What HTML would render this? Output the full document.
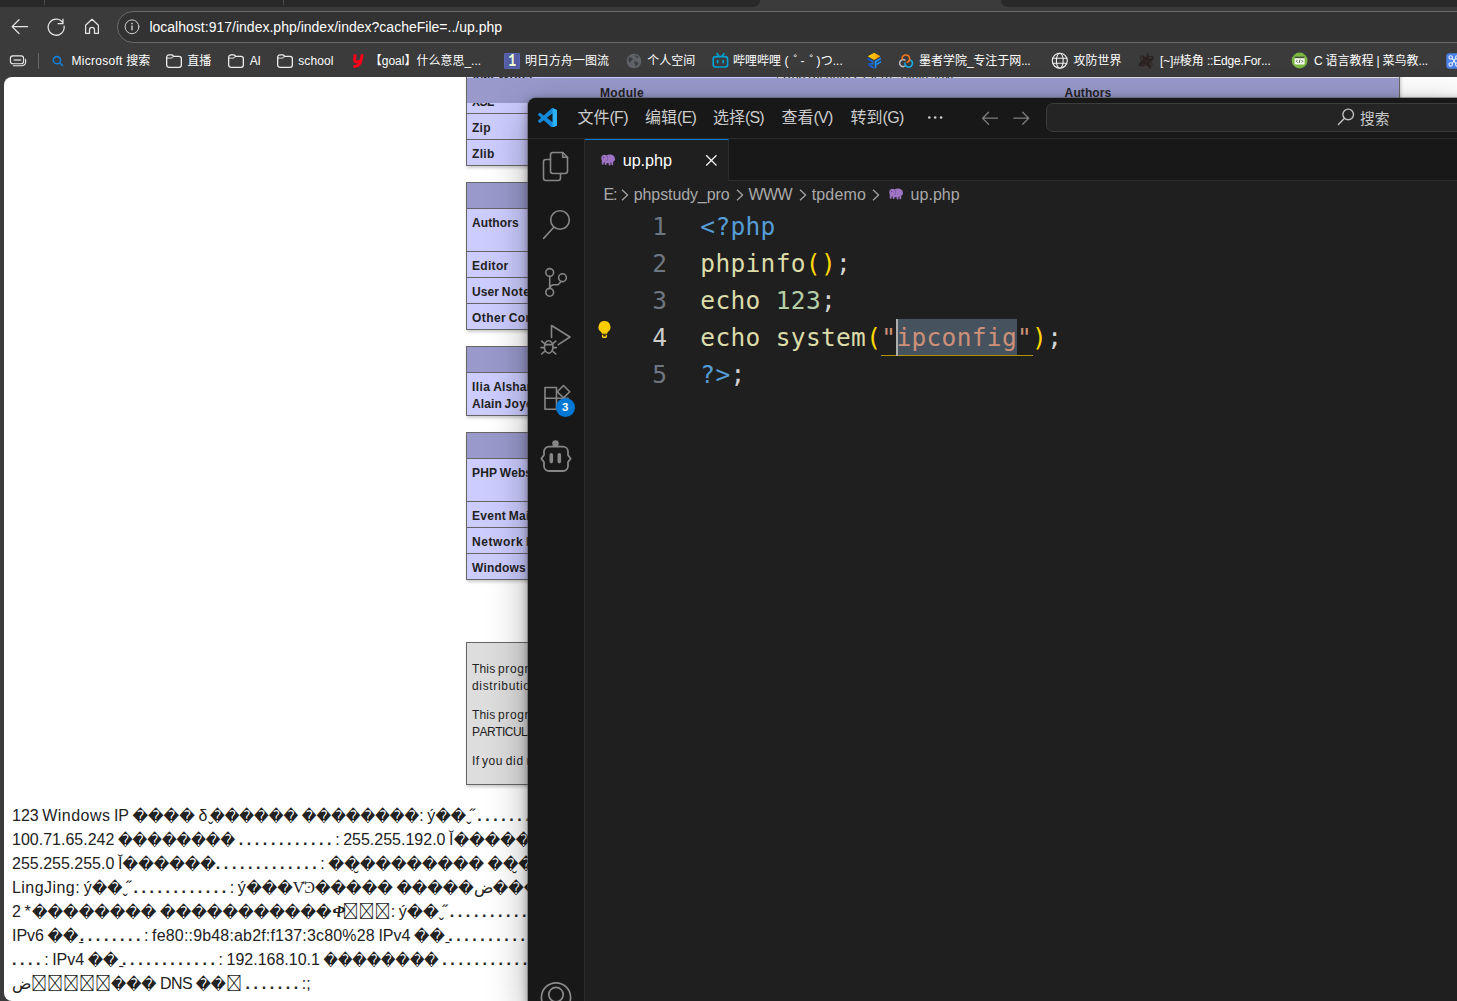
<!DOCTYPE html>
<html lang="zh-CN">
<head>
<meta charset="utf-8">
<title>up.php</title>
<style>
*{box-sizing:border-box}
html,body{margin:0;padding:0}
body{width:1457px;height:1001px;overflow:hidden;position:relative;background:#3b3b3b;
  font-family:"Liberation Sans","Noto Sans CJK SC",sans-serif;color:#222;font-kerning:none}
.abs{position:absolute}
/* ---------- browser chrome ---------- */
#tabstrip{left:0;top:0;width:1457px;height:7px;background:#3b3b3b}
#tabstrip .t1{left:0;top:0;width:760px;height:7px;background:#292929;border-bottom-right-radius:7px}
#tabstrip .t2{left:1001px;top:0;width:456px;height:7px;background:#292929;border-bottom-left-radius:7px}
#tabstrip .sep{top:0;width:1px;height:5px;background:#4a4a4a}
#urlbar{left:117px;top:11px;width:1400px;height:32px;border:1px solid #6a6a6a;border-radius:16px;background:#323232}
#url{top:17px;font-size:14px;line-height:20px;color:#fff;white-space:nowrap}
.bm{top:51px;height:20px;line-height:20px;font-size:12px;color:#fff;white-space:nowrap}

/* ---------- page ---------- */
#page{left:4px;top:77px;width:1453px;height:924px;background:#fff;border-radius:8px 0 0 8px;overflow:hidden}
#page table{position:absolute;left:462px;width:934px;border-collapse:collapse;border:0;box-shadow:1px 2px 3px #ccc;table-layout:fixed}
#page td,#page th{word-spacing:-.65px;border:1px solid #666;font-size:12px;line-height:17px;vertical-align:baseline;padding:6.4px 5px 1.6px;text-align:left;white-space:nowrap;overflow:hidden}
#page th{text-align:center}
.e{background:#ccf;width:311px;font-weight:bold}
.h{background:#99c;font-weight:bold}
.v{background:#ddd}
.v p{margin:12px 0;word-spacing:-.65px;font-size:12px;line-height:17px;white-space:nowrap}
#sticky{word-spacing:-.65px;left:463px;top:1px;width:932px;height:25px;background:#99c;font-weight:bold;font-size:12px;line-height:17px}
#sticky div{position:absolute;top:6.5px;text-align:center}
#out{position:absolute;left:8px;top:727px;font-size:16px;line-height:24px;white-space:nowrap;color:#222;word-spacing:-.86px}
#out .q{display:inline-block;font-family:"DejaVu Sans",sans-serif;line-height:20px;letter-spacing:0;word-spacing:0}
.sf{font-family:"Liberation Serif",serif;line-height:0}
.nf{font-family:"Noto Sans CJK SC",sans-serif;line-height:0}

/* ---------- vscode ---------- */
#vsc{left:528px;top:98px;width:940px;height:910px;background:#1f1f1f;border-radius:8px 0 0 0;box-shadow:0 0 0 1px rgba(80,80,80,.45),0 2px 8px rgba(0,0,0,.36),0 12px 40px rgba(0,0,0,.32);overflow:hidden;color:#ccc}
#vsc .title{left:0;top:0;width:940px;height:41px;background:#181818;border-bottom:1px solid #2b2b2b}
#vsc .act{left:0;top:41px;width:57px;height:870px;background:#181818;border-right:1px solid #2b2b2b}
#vsc .tabs{left:57px;top:41px;width:890px;height:42px;background:#181818;border-bottom:1px solid #2b2b2b}
#vsc .tab{left:57px;top:41px;width:144px;height:42px;background:#1f1f1f;border-top:1.5px solid #0078d4;border-right:1px solid #2b2b2b}
.menu{top:8px;height:24px;line-height:24px;font-size:16px;color:#ccc;white-space:nowrap}
#sbox{left:518px;top:5px;width:440px;height:29px;border:1px solid #3c3c3c;border-radius:7px;background:#242424}
.crumb{top:85px;height:24px;line-height:24px;font-size:16px;color:#a9a9a9;white-space:nowrap}
.code{left:172.3px;height:37px;line-height:37px;font-family:"DejaVu Sans Mono","Liberation Mono",monospace;font-size:24.5px;letter-spacing:.33px;white-space:pre;color:#d4d4d4}
.ln{left:99px;width:40px;text-align:right;height:37px;line-height:37px;font-family:"DejaVu Sans Mono","Liberation Mono",monospace;font-size:24.5px;color:#6e7681}
</style>
</head>
<body>
<div id="tabstrip" class="abs">
  <div class="abs t1"></div><div class="abs t2"></div>
  <div class="abs sep" style="left:44px"></div><div class="abs sep" style="left:283px"></div>
</div>
<div id="urlbar" class="abs"></div>
<div id="url" class="abs" style="left:149.4px;"><span style="letter-spacing:0.01px">localhost:917/index.php/index/index?cacheFile=../up.php</span></div>
<svg class="abs" style="left:0;top:7px" width="150" height="40" viewBox="0 0 150 40" fill="none" stroke="#e4e4e4" stroke-width="1.25" stroke-linecap="round" stroke-linejoin="round">
  <path d="M27.6 19.6H12.4M19 12.7L12.1 19.6L19 26.5"/>
  <path d="M64.100 19.100A8 8 0 1 1 63.100 16.200M62.950 12V16.650H58.100"/>
  <path d="M85.600 18.200L92 12.300L98.400 18.200V26.400H94.500V22.900A2.500 2.500 0 0 0 89.500 22.900V26.400H85.600Z"/>
  <circle cx="132" cy="19.8" r="6.9" stroke="#cfcfcf" stroke-width="1"/>
  <path d="M132 19v3.8" stroke="#cfcfcf" stroke-width="1.4"/><circle cx="132" cy="16.6" r="0.85" fill="#cfcfcf" stroke="none"/>
</svg>
<svg class="abs" style="left:0;top:48px" width="70" height="28" viewBox="0 0 70 28" fill="none">
  <rect x="10.400" y="7.900" width="13.200" height="7.800" rx="2.500" stroke="#ececec" stroke-width="1.150"/>
  <path d="M14.200 11.900h6.400" stroke="#c9c9c9" stroke-width="1.500" stroke-linecap="round"/>
  <path d="M13.300 17.700h9a3.300 3.300 0 0 0 3.300-3.300v-3.200" stroke="#ececec" stroke-width="1.100" stroke-linecap="round"/>
  <path d="M38.500 5.200v15.600" stroke="#686868" stroke-width="1"/>
  <circle cx="56.900" cy="12.200" r="3.600" stroke="#117ed8" stroke-width="1.600"/><path d="M59.600 14.900l3 2.600" stroke="#117ed8" stroke-width="1.600" stroke-linecap="round"/>
</svg>
<div class="abs bm" style="left:71.5px;"><span style="letter-spacing:0.27px">Microsoft </span>搜索</div>
<div class="abs bm" style="left:187.2px;">直播</div>
<div class="abs bm" style="left:249.7px;"><span style="letter-spacing:-0.20px">AI</span></div>
<div class="abs bm" style="left:298.3px;"><span style="letter-spacing:0.07px">school</span></div>
<div class="abs bm" style="left:369.7px;">【<span style="letter-spacing:0.00px">goal</span>】什么意思<span style="letter-spacing:0.00px">_...</span></div>
<div class="abs bm" style="left:525.0px;">明日方舟一图流</div>
<div class="abs bm" style="left:647.3px;">个人空间</div>
<div class="abs bm" style="left:733.1px;">哔哩哔哩<span style="letter-spacing:0.04px"> (</span><span style="position:relative;left:5px">゜</span><span style="letter-spacing:0.04px">-</span><span style="position:relative;left:5px">゜</span><span style="letter-spacing:0.04px">)</span>つ<span style="letter-spacing:0.04px">...</span></div>
<div class="abs bm" style="left:919.0px;">墨者学院<span style="letter-spacing:-0.36px">_</span>专注于网<span style="letter-spacing:-0.36px">...</span></div>
<div class="abs bm" style="left:1073.6px;">攻防世界</div>
<div class="abs bm" style="left:1160.1px;"><span style="letter-spacing:-0.18px">[~]#</span>棱角<span style="letter-spacing:-0.18px"> ::Edge.For...</span></div>
<div class="abs bm" style="left:1313.9px;"><span style="letter-spacing:-0.24px">C </span>语言教程<span style="letter-spacing:-0.24px"> | </span>菜鸟教<span style="letter-spacing:-0.24px">...</span></div>
<svg class="abs" style="left:165px;top:53px" width="18" height="16" viewBox="0 0 18 16" fill="none" stroke="#ededed" stroke-width="1.3" stroke-linejoin="round"><path d="M1.650 4.300A2.400 2.400 0 0 1 4.050 1.900H6.600Q7.600 1.900 8.200 2.700L8.700 3.300H13.950A2.400 2.400 0 0 1 16.350 5.700V11.900A2.400 2.400 0 0 1 13.950 14.300H4.050A2.400 2.400 0 0 1 1.650 11.900Z"/><path d="M1.650 5.200H6.300L8.700 3.300" stroke-opacity=".7"/></svg><svg class="abs" style="left:227px;top:53px" width="18" height="16" viewBox="0 0 18 16" fill="none" stroke="#ededed" stroke-width="1.3" stroke-linejoin="round"><path d="M1.650 4.300A2.400 2.400 0 0 1 4.050 1.900H6.600Q7.600 1.900 8.200 2.700L8.700 3.300H13.950A2.400 2.400 0 0 1 16.350 5.700V11.900A2.400 2.400 0 0 1 13.950 14.300H4.050A2.400 2.400 0 0 1 1.650 11.900Z"/><path d="M1.650 5.200H6.300L8.700 3.300" stroke-opacity=".7"/></svg><svg class="abs" style="left:276px;top:53px" width="18" height="16" viewBox="0 0 18 16" fill="none" stroke="#ededed" stroke-width="1.3" stroke-linejoin="round"><path d="M1.650 4.300A2.400 2.400 0 0 1 4.050 1.900H6.600Q7.600 1.900 8.200 2.700L8.700 3.300H13.950A2.400 2.400 0 0 1 16.350 5.700V11.900A2.400 2.400 0 0 1 13.950 14.300H4.050A2.400 2.400 0 0 1 1.650 11.900Z"/><path d="M1.650 5.200H6.300L8.700 3.300" stroke-opacity=".7"/></svg>

<!-- youdao y -->
<svg class="abs" style="left:351px;top:52px" width="15" height="18" viewBox="0 0 15 18" fill="none" stroke="#ff0018" stroke-width="2.900" stroke-linejoin="round"><path d="M4.100 2.300L3.600 7.600Q3.500 10.300 6.300 9.900L9.600 9.200"/><path d="M11.300 2.300L9.700 9.800Q8.700 14.300 2.400 14.600"/></svg>
<!-- "1" icon -->
<div class="abs" style="left:504px;top:53px;width:16px;height:16px;border-radius:2px;background:#545da3;box-shadow:inset 0 0 0 1px #5a67b6;color:#ecffd0;font:bold 17.500px/17.500px 'Liberation Mono',monospace;text-align:center;overflow:hidden"><span style="display:inline-block;transform:scaleX(.72)">1</span></div>
<!-- grey globe -->
<svg class="abs" style="left:626px;top:53px" width="16" height="16" viewBox="0 0 16 16"><circle cx="8" cy="8" r="7.3" fill="#5f6368"/><path d="M3 4.5c1.5-.5 3 .2 3.6 1.2.5 1-.6 1.600-1.400 2.200S4.600 9.800 3.400 9.300 2 6 3 4.500zM9 2.200c1.600 0 3.200 1 3.800 2.300-.8.500-2 .300-2.700-.300S8.600 3 9 2.200zM8.600 8.600c1.300-.500 3.300.100 3.800 1.200.400 1.100-.800 2.700-2.100 3.300-1 .300-1.200-1-1.600-1.900S7.600 9 8.600 8.600z" fill="#3c4043"/></svg>
<!-- bilibili -->
<svg class="abs" style="left:712px;top:52px" width="17" height="17" viewBox="0 0 17 17" fill="none" stroke="#00a1d6" stroke-width="1.6" stroke-linecap="round" stroke-linejoin="round"><rect x="1.2" y="4.600" width="14.400" height="10.400" rx="2.600"/><path d="M5 1.600l2 2.600M12 1.600l-2 2.600"/><path d="M5.600 8.600v2M11.200 8.600v2" stroke-width="1.800"/></svg>
<!-- cube -->
<svg class="abs" style="left:867px;top:52px" width="15" height="18" viewBox="0 0 15 18"><defs><linearGradient id="cg" x1="0" x2="1"><stop offset="0" stop-color="#ffd800"/><stop offset="1" stop-color="#ff9a00"/></linearGradient><linearGradient id="cb" x1="0" x2="1"><stop offset="0" stop-color="#0a46c8"/><stop offset="1" stop-color="#1f7cf2"/></linearGradient></defs><path d="M7.200 .7L13.400 4.200 7.200 7.900 .8 4.200z" fill="url(#cg)"/><path d="M.3 5.500L6.500 9.100V11L.3 7.400zM6.500 11L.3 11.200V12.800L6.500 12.600zM.3 11.200L6.500 14.800V16.700L.3 13.100z" fill="url(#cb)"/><path d="M7.700 9.100L13.900 5.500V7.400L9.400 10V11.400L13.900 8.800V10.700L9.400 13.300V15.700L7.700 16.700z" fill="#1e8bfa"/></svg>
<!-- cloud -->
<svg class="abs" style="left:898px;top:53px" width="17" height="16" viewBox="0 0 17 16" fill="none" stroke-width="1.550" stroke-linecap="round"><path d="M6.85 7.07A3.50 3.50 0 1 0 6.30 13.39" stroke="#b9bdc3"/><path d="M12.26 6.95A3.70 3.70 0 1 1 7.01 9.98" stroke="#16a9e6"/><path d="M4.26 6.34A3.70 3.70 0 1 1 9.17 9.18" stroke="#f6761f"/></svg>
<!-- globe outline -->
<svg class="abs" style="left:1051px;top:52px" width="18" height="18" viewBox="0 0 18 18" fill="none" stroke="#f0f0f0" stroke-width="1.100"><circle cx="8.800" cy="8.700" r="7.500"/><ellipse cx="8.800" cy="8.700" rx="3.400" ry="7.500"/><path d="M1.600 6.200h14.400M1.600 11.200h14.400"/></svg>
<!-- dark star -->
<svg class="abs" style="left:1137px;top:52px" width="18" height="18" viewBox="0 0 18 18" fill="none" stroke="#2a2020" stroke-width=".9"><path d="M10.800 1L11.300 7.300 16.600 5.600 11.900 10.200 13.400 16.800 8.300 11.600 1.800 12.800 6.800 8.600 5.400 3.400 9.300 6.600z" fill="#2e2424"/><ellipse cx="9.200" cy="9.200" rx="7.800" ry="2.800" transform="rotate(-32 9.200 9.200)"/><ellipse cx="9.200" cy="9.200" rx="7.200" ry="2.600" transform="rotate(38 9.200 9.200)"/></svg>
<!-- runoob -->
<svg class="abs" style="left:1291px;top:52px" width="17" height="17" viewBox="0 0 17 17"><circle cx="8.600" cy="8.500" r="7.900" fill="#7cb83f"/><rect x="3.600" y="4.400" width="10" height="8.200" rx=".8" fill="#f4f8ee"/><rect x="3.600" y="4.400" width="10" height="1.800" fill="#3c5a28"/><path d="M6.600 8l-1.300 1.300 1.300 1.300M10.600 8l1.300 1.300-1.300 1.300M9 7.700l-.9 3.300" stroke="#33471f" stroke-width=".8" fill="none"/></svg>
<!-- blue icon (cut) -->
<svg class="abs" style="left:1446px;top:53px" width="16" height="16" viewBox="0 0 16 16"><rect x=".3" y=".3" width="15.400" height="15.400" rx="3" fill="#4a82ea"/><path d="M3 4.400a1.700 1.700 0 1 1 3.400 0 1.700 1.700 0 1 1-3.400 0zM3 11.400a1.700 1.700 0 1 1 3.400 0 1.700 1.700 0 1 1-3.400 0zM6.300 5.400l3.400 5M6.300 10.400l3.400-5M9.600 4.400a1.700 1.700 0 1 1 3.400 0 1.700 1.700 0 1 1-3.400 0zM9.600 11.400a1.700 1.700 0 1 1 3.400 0 1.700 1.700 0 1 1-3.400 0z" fill="none" stroke="#e9f0ff" stroke-width="1.100"/></svg>

<div id="page" class="abs">
<table style="top:-16px"><tbody>
<tr><td class="e"><span style="letter-spacing:0.20px">XMLWriter</span></td><td class="v"><span style="letter-spacing:0.10px">Rob</span> <span style="letter-spacing:0.16px">Richards,</span> <span style="letter-spacing:0.25px">Pierre-Alain</span> <span style="letter-spacing:0.31px">Joye</span></td></tr>
<tr><td class="e"><span style="letter-spacing:-0.46px">XSL</span></td><td class="v"><span style="letter-spacing:0.34px">Christian</span> <span style="letter-spacing:0.29px">Stocker,</span> <span style="letter-spacing:0.10px">Rob</span> <span style="letter-spacing:0.18px">Richards</span></td></tr>
<tr><td class="e"><span style="letter-spacing:0.25px">Zip</span></td><td class="v"><span style="letter-spacing:0.25px">Pierre-Alain</span> <span style="letter-spacing:0.25px">Joye,</span> <span style="letter-spacing:0.17px">Remi</span> <span style="letter-spacing:0.37px">Collet</span></td></tr>
<tr><td class="e"><span style="letter-spacing:0.30px">Zlib</span></td><td class="v">Rasmus <span style="letter-spacing:0.38px">Lerdorf,</span> <span style="letter-spacing:0.27px">Stefan</span> <span style="letter-spacing:0.24px">Roehrich,</span> Zeev <span style="letter-spacing:0.17px">Suraski,</span> <span style="letter-spacing:0.31px">Jade</span> <span style="letter-spacing:0.51px">Nicoletti,</span> <span style="letter-spacing:0.27px">Michael</span> <span style="letter-spacing:0.29px">Wallner</span></td></tr>
</tbody></table>
<div id="sticky" class="abs"><div style="left:0;width:310px"><span style="letter-spacing:0.31px">Module</span></div><div style="left:310px;width:622px"><span style="letter-spacing:0.11px">Authors</span></div></div>
<table style="top:105px"><tbody>
<tr class="h"><th colspan="2"><span style="letter-spacing:0.14px">PHP</span> <span style="letter-spacing:0.38px">Documentation</span></th></tr>
<tr><td class="e" style="width:467px"><span style="letter-spacing:0.11px">Authors</span></td><td class="v"><span style="letter-spacing:0.35px">Mehdi</span> <span style="letter-spacing:0.27px">Achour,</span> <span style="letter-spacing:0.42px">Friedhelm</span> <span style="letter-spacing:0.15px">Betz,</span> <span style="letter-spacing:0.44px">Antony</span> <span style="letter-spacing:0.19px">Dovgal,</span> <span style="letter-spacing:0.47px">Nuno</span> <span style="letter-spacing:0.13px">Lopes,</span> <span style="letter-spacing:0.17px">Hannes</span> <span style="letter-spacing:0.17px">Magnusson,</span> <span style="letter-spacing:0.50px">Philip</span> <span style="letter-spacing:0.20px">Olson,</span><br><span style="letter-spacing:0.05px">Georg</span> <span style="letter-spacing:0.27px">Richter,</span> <span style="letter-spacing:0.34px">Damien</span> Seguy, <span style="letter-spacing:0.50px">Jakub</span> <span style="letter-spacing:0.06px">Vrana,</span> <span style="letter-spacing:0.31px">Adam</span> <span style="letter-spacing:0.22px">Harvey</span></td></tr>
<tr><td class="e"><span style="letter-spacing:0.31px">Editor</span></td><td class="v"><span style="letter-spacing:0.28px">Peter</span> <span style="letter-spacing:0.46px">Cowburn</span></td></tr>
<tr><td class="e"><span style="letter-spacing:0.11px">User</span> <span style="letter-spacing:0.46px">Note</span> <span style="letter-spacing:0.33px">Maintainers</span></td><td class="v"><span style="letter-spacing:0.28px">Daniel</span> <span style="letter-spacing:-0.20px">P.</span> <span style="letter-spacing:0.46px">Brown,</span> <span style="letter-spacing:0.31px">Thiago</span> <span style="letter-spacing:0.42px">Henrique</span> <span style="letter-spacing:0.33px">Pojda</span></td></tr>
<tr><td class="e"><span style="letter-spacing:0.43px">Other</span> <span style="letter-spacing:0.29px">Contributors</span></td><td class="v"><span style="letter-spacing:0.29px">Previously</span> <span style="letter-spacing:0.38px">active</span> <span style="letter-spacing:0.42px">authors,</span> <span style="letter-spacing:0.49px">editors</span> <span style="letter-spacing:0.50px">and</span> <span style="letter-spacing:0.61px">other</span> <span style="letter-spacing:0.61px">contributors</span> <span style="letter-spacing:0.24px">are</span> <span style="letter-spacing:0.49px">listed</span> <span style="letter-spacing:0.64px">in</span> <span style="letter-spacing:0.59px">the</span> <span style="letter-spacing:0.47px">manual.</span></td></tr>
</tbody></table>
<table style="top:269px"><tbody>
<tr class="h"><th><span style="letter-spacing:0.14px">PHP</span> <span style="letter-spacing:0.38px">Quality</span> <span style="letter-spacing:-0.09px">Assurance</span> <span style="letter-spacing:0.45px">Team</span></th></tr>
<tr><td class="e" style="width:auto"><span style="letter-spacing:0.45px">Ilia</span> <span style="letter-spacing:0.15px">Alshanetsky,</span> <span style="letter-spacing:0.20px">Joerg</span> <span style="letter-spacing:0.15px">Behrens,</span> <span style="letter-spacing:0.20px">Antony</span> <span style="letter-spacing:0.23px">Dovgal,</span> <span style="letter-spacing:0.35px">Stefan</span> <span style="letter-spacing:-0.11px">Esser,</span> <span style="letter-spacing:0.18px">Moriyoshi</span> <span style="letter-spacing:0.29px">Koizumi,</span> <span style="letter-spacing:0.07px">Magnus</span> <span style="letter-spacing:0.60px">Maatta,</span> <span style="letter-spacing:0.22px">Sebastian</span> <span style="letter-spacing:0.36px">Nohn,</span> <span style="letter-spacing:0.22px">Derick</span> <span style="letter-spacing:0.23px">Rethans,</span> <span style="letter-spacing:0.30px">Melvyn</span> <span style="letter-spacing:0.18px">Sopacua,</span> <span style="letter-spacing:0.35px">Pierre-</span><br><span style="letter-spacing:0.11px">Alain</span> <span style="letter-spacing:0.28px">Joye,</span> <span style="letter-spacing:0.49px">Dmitry</span> <span style="letter-spacing:0.22px">Stogov,</span> <span style="letter-spacing:0.24px">Felipe</span> <span style="letter-spacing:0.33px">Pena,</span> <span style="letter-spacing:0.25px">David</span> <span style="letter-spacing:0.19px">Soria</span> <span style="letter-spacing:0.42px">Parra,</span> <span style="letter-spacing:0.22px">Stanislav</span> <span style="letter-spacing:0.23px">Malyshev,</span> <span style="letter-spacing:0.31px">Julien</span> <span style="letter-spacing:0.34px">Pauli,</span> <span style="letter-spacing:0.32px">Stephen</span> <span style="letter-spacing:0.23px">Zarkos,</span> <span style="letter-spacing:0.25px">Anatol</span> <span style="letter-spacing:0.14px">Belski,</span> <span style="letter-spacing:0.26px">Remi</span> <span style="letter-spacing:0.31px">Collet,</span> <span style="letter-spacing:0.14px">Ferenc</span> <span style="letter-spacing:-0.11px">Kovacs</span></td></tr>
</tbody></table>
<table style="top:355px"><tbody>
<tr class="h"><th colspan="2"><span style="letter-spacing:0.07px">Websites</span> <span style="letter-spacing:0.39px">and</span> <span style="letter-spacing:0.39px">Infrastructure</span> <span style="letter-spacing:0.67px">team</span></th></tr>
<tr><td class="e" style="width:467px"><span style="letter-spacing:0.14px">PHP</span> <span style="letter-spacing:0.07px">Websites</span> <span style="letter-spacing:0.45px">Team</span></td><td class="v">Rasmus <span style="letter-spacing:0.38px">Lerdorf,</span> <span style="letter-spacing:0.17px">Hannes</span> <span style="letter-spacing:0.17px">Magnusson,</span> <span style="letter-spacing:0.50px">Philip</span> <span style="letter-spacing:0.20px">Olson,</span> <span style="letter-spacing:0.15px">Lukas</span> <span style="letter-spacing:0.27px">Kahwe</span> <span style="letter-spacing:0.45px">Smith,</span> <span style="letter-spacing:0.25px">Pierre-Alain</span> <span style="letter-spacing:0.25px">Joye,</span> <span style="letter-spacing:0.26px">Kalle</span><br><span style="letter-spacing:0.44px">Sommer</span> <span style="letter-spacing:0.20px">Nielsen,</span> <span style="letter-spacing:0.28px">Peter</span> <span style="letter-spacing:0.40px">Cowburn,</span> <span style="letter-spacing:0.31px">Adam</span> <span style="letter-spacing:0.18px">Harvey,</span> <span style="letter-spacing:0.11px">Ferenc</span> <span style="letter-spacing:0.06px">Kovacs,</span> <span style="letter-spacing:0.18px">Levi</span> <span style="letter-spacing:0.40px">Morrison</span></td></tr>
<tr><td class="e"><span style="letter-spacing:0.27px">Event</span> <span style="letter-spacing:0.33px">Maintainers</span></td><td class="v"><span style="letter-spacing:0.34px">Damien</span> Seguy, <span style="letter-spacing:0.28px">Daniel</span> <span style="letter-spacing:-0.20px">P.</span> <span style="letter-spacing:0.55px">Brown</span></td></tr>
<tr><td class="e"><span style="letter-spacing:0.57px">Network</span> <span style="letter-spacing:0.39px">Infrastructure</span></td><td class="v"><span style="letter-spacing:0.28px">Daniel</span> <span style="letter-spacing:-0.20px">P.</span> <span style="letter-spacing:0.55px">Brown</span></td></tr>
<tr><td class="e"><span style="letter-spacing:0.17px">Windows</span> <span style="letter-spacing:0.39px">Infrastructure</span></td><td class="v">Alex <span style="letter-spacing:0.32px">Schoenmaker</span></td></tr>
</tbody></table>
<table style="top:565px"><tbody><tr><td class="v">
<p><span style="letter-spacing:0.18px">This</span> <span style="letter-spacing:0.57px">program</span> <span style="letter-spacing:0.12px">is</span> <span style="letter-spacing:0.29px">free</span> <span style="letter-spacing:0.41px">software;</span> <span style="letter-spacing:0.49px">you</span> <span style="letter-spacing:0.28px">can</span> <span style="letter-spacing:0.55px">redistribute</span> <span style="letter-spacing:0.91px">it</span> <span style="letter-spacing:0.69px">and/or</span> <span style="letter-spacing:0.66px">modify</span> <span style="letter-spacing:0.91px">it</span> <span style="letter-spacing:0.53px">under</span> <span style="letter-spacing:0.59px">the</span> <span style="letter-spacing:0.51px">terms</span> <span style="letter-spacing:0.58px">of</span> <span style="letter-spacing:0.59px">the</span> <span style="letter-spacing:-0.25px">PHP</span> <span style="letter-spacing:0.12px">License</span> <span style="letter-spacing:-0.15px">as</span> <span style="letter-spacing:0.50px">published</span> <span style="letter-spacing:0.50px">by</span> <span style="letter-spacing:0.59px">the</span> <span style="letter-spacing:-0.25px">PHP</span> <span style="letter-spacing:0.31px">Group</span> <span style="letter-spacing:0.50px">and</span> <span style="letter-spacing:0.53px">included</span> <span style="letter-spacing:0.64px">in</span> <span style="letter-spacing:0.59px">the</span><br><span style="letter-spacing:0.66px">distribution</span> <span style="letter-spacing:0.64px">in</span> <span style="letter-spacing:0.59px">the</span> <span style="letter-spacing:0.38px">file:</span> <span style="letter-spacing:-0.53px">LICENSE</span></p>
<p><span style="letter-spacing:0.18px">This</span> <span style="letter-spacing:0.57px">program</span> <span style="letter-spacing:0.12px">is</span> <span style="letter-spacing:0.62px">distributed</span> <span style="letter-spacing:0.64px">in</span> <span style="letter-spacing:0.59px">the</span> <span style="letter-spacing:0.49px">hope</span> <span style="letter-spacing:0.77px">that</span> <span style="letter-spacing:0.91px">it</span> <span style="letter-spacing:0.77px">will</span> <span style="letter-spacing:0.36px">be</span> <span style="letter-spacing:0.30px">useful,</span> <span style="letter-spacing:0.85px">but</span> <span style="letter-spacing:-0.18px">WITHOUT</span> <span style="letter-spacing:-0.78px">ANY</span> <span style="letter-spacing:-0.67px">WARRANTY;</span> <span style="letter-spacing:0.83px">without</span> <span style="letter-spacing:0.21px">even</span> <span style="letter-spacing:0.59px">the</span> <span style="letter-spacing:0.66px">implied</span> <span style="letter-spacing:0.57px">warranty</span> <span style="letter-spacing:0.58px">of</span> <span style="letter-spacing:-0.43px">MERCHANTABILITY</span> <span style="letter-spacing:0.63px">or</span> <span style="letter-spacing:-0.47px">FITNESS</span> <span style="letter-spacing:-0.73px">FOR</span> <span style="letter-spacing:-0.71px">A</span><br><span style="letter-spacing:-0.51px">PARTICULAR</span> <span style="letter-spacing:-0.51px">PURPOSE.</span></p>
<p><span style="letter-spacing:0.37px">If</span> <span style="letter-spacing:0.49px">you</span> <span style="letter-spacing:0.72px">did</span> <span style="letter-spacing:0.81px">not</span> <span style="letter-spacing:0.23px">receive</span> <span style="letter-spacing:0.08px">a</span> <span style="letter-spacing:0.43px">copy</span> <span style="letter-spacing:0.58px">of</span> <span style="letter-spacing:0.59px">the</span> <span style="letter-spacing:-0.25px">PHP</span> <span style="letter-spacing:0.21px">license,</span> <span style="letter-spacing:0.63px">or</span> <span style="letter-spacing:0.23px">have</span> <span style="letter-spacing:0.33px">any</span> <span style="letter-spacing:0.41px">questions</span> <span style="letter-spacing:0.64px">about</span> <span style="letter-spacing:-0.25px">PHP</span> <span style="letter-spacing:0.31px">licensing,</span> <span style="letter-spacing:0.19px">please</span> <span style="letter-spacing:0.56px">contact</span> <span style="letter-spacing:0.30px">license@php.net.</span></p>
</td></tr></tbody></table>
<div id="out"><div>123 <span style="letter-spacing:0.46px">Windows</span> <span style="letter-spacing:-0.15px">IP</span> <span class="q" style="font-size:15.21px;transform:translateY(.6px) scaleY(1.056);transform-origin:50% 9.0px">����</span> <span style="letter-spacing:0.60px">δ</span><span style="letter-spacing:-3.33px">ˬ</span><span class="q" style="font-size:14.37px;transform:translateY(.6px) scaleY(1.118);transform-origin:50% 9.0px">������</span> <span class="q" style="font-size:14.31px;transform:translateY(.6px) scaleY(1.122);transform-origin:50% 9.0px">��������</span>: <span style="letter-spacing:0.34px">ý</span><span class="q" style="font-size:14.97px;transform:translateY(.6px) scaleY(1.073);transform-origin:50% 9.0px">��</span><span style="letter-spacing:-2.13px">ˬ</span><span style="letter-spacing:-1.13px">˝</span><b> . . . . . . . . . . . .</b> : <span style="letter-spacing:0.34px">ý</span><span class="q" style="font-size:15.12px;transform:translateY(.6px) scaleY(1.063);transform-origin:50% 9.0px">���</span></div><div>100.71.65.242 <span class="q" style="font-size:14.31px;transform:translateY(.6px) scaleY(1.122);transform-origin:50% 9.0px">��������</span><b> . . . . . . . . . . . .</b> : 255.255.192.0 <span style="letter-spacing:0.24px">Ǐ</span><span class="q" style="font-size:15.12px;transform:translateY(.6px) scaleY(1.063);transform-origin:50% 9.0px">��������</span></div><div>255.255.255.0 <span style="letter-spacing:0.24px">Ǐ</span><span class="q" style="font-size:15.16px;transform:translateY(.6px) scaleY(1.059);transform-origin:50% 9.0px">������</span><b>. . . . . . . . . . . . .</b> : <span class="q" style="font-size:15.46px;transform:translateY(.6px) scaleY(1.039);transform-origin:50% 8.9px">��̮</span><span class="q" style="font-size:15.12px;transform:translateY(.6px) scaleY(1.063);transform-origin:50% 9.0px">��������</span> <span class="q" style="font-size:15.02px;transform:translateY(.6px) scaleY(1.070);transform-origin:50% 9.0px">��̮</span><span class="q" style="font-size:15.12px;transform:translateY(.6px) scaleY(1.063);transform-origin:50% 9.0px">����</span></div><div><span style="letter-spacing:0.45px">LingJing:</span> <span style="letter-spacing:0.34px">ý</span><span class="q" style="font-size:14.82px;transform:translateY(.6px) scaleY(1.084);transform-origin:50% 9.0px">��</span><span style="letter-spacing:-2.13px">ˬ</span><span style="letter-spacing:-1.13px">˝</span><b> . . . . . . . . . . . .</b> : <span style="letter-spacing:0.34px">ý</span><span class="q" style="font-size:15.12px;transform:translateY(.6px) scaleY(1.063);transform-origin:50% 9.0px">���</span><span class="sf">V̎Ͽ</span><span class="q" style="font-size:15.19px;transform:translateY(.6px) scaleY(1.057);transform-origin:50% 9.0px">�����</span> <span class="q" style="font-size:15.12px;transform:translateY(.6px) scaleY(1.063);transform-origin:50% 9.0px">�����</span>ض<span class="q" style="font-size:15.12px;transform:translateY(.6px) scaleY(1.063);transform-origin:50% 9.0px">�����</span></div><div>2 <span style="letter-spacing:1.25px">*</span><span class="q" style="font-size:15.18px;transform:translateY(.6px) scaleY(1.058);transform-origin:50% 9.0px">��������</span> <span class="q" style="font-size:15.22px;transform:translateY(.6px) scaleY(1.055);transform-origin:50% 9.0px">�����������</span><span style="font-size:21px;line-height:0;letter-spacing:-3.100px">ቀ</span><span class="nf">&#xE5E5;&#xE5E5;&#xE5E5;</span>: <span style="letter-spacing:0.34px">ý</span><span class="q" style="font-size:15.51px;transform:translateY(.6px) scaleY(1.036);transform-origin:50% 8.9px">��</span><span style="letter-spacing:-2.13px">ˬ</span><span style="letter-spacing:-1.13px">˝</span><b> . . . . . . . . . . . .</b> : <span style="letter-spacing:0.34px">ý</span><span class="q" style="font-size:15.12px;transform:translateY(.6px) scaleY(1.063);transform-origin:50% 9.0px">���</span></div><div>IPv6 <span class="q" style="font-size:15.02px;transform:translateY(.6px) scaleY(1.070);transform-origin:50% 9.0px">��</span><span style="letter-spacing:-3.93px">ˍ</span><b>. . . . . . . .</b> : <span style="letter-spacing:0.17px">fe80::9b48:ab2f:f137:3c80%28</span> IPv4 <span class="q" style="font-size:14.97px;transform:translateY(.6px) scaleY(1.073);transform-origin:50% 9.0px">��</span><span style="letter-spacing:-1.93px">ˍ</span><b>. . . . . . . . . . . .</b> :</div><div><b>. . . .</b> : IPv4 <span class="q" style="font-size:14.97px;transform:translateY(.6px) scaleY(1.073);transform-origin:50% 9.0px">��</span><span style="letter-spacing:-1.73px">ˍ</span><b>. . . . . . . . . . . .</b> : 192.168.10.1 <span class="q" style="font-size:14.06px;transform:translateY(.6px) scaleY(1.143);transform-origin:50% 9.0px">��������</span><b> . . . . . . . . . . . .</b> :</div><div>ض<span class="nf">&#xE5E5;&#xE5E5;&#xE5E5;&#xE5E5;&#xE5E5;</span><span class="q" style="font-size:14.76px;transform:translateY(.6px) scaleY(1.088);transform-origin:50% 9.0px">���</span> <span style="letter-spacing:-0.56px">DNS</span> <span class="q" style="font-size:14.77px;transform:translateY(.6px) scaleY(1.087);transform-origin:50% 9.0px">��</span><span class="nf">&#xE5E5;</span><b> . . . . . . .</b> :;</div></div>
</div>
<div id="vsc" class="abs">
<div class="abs title"></div><div class="abs act"></div><div class="abs tabs"></div><div class="abs tab"></div>
<svg class="abs" style="left:9.500px;top:9.800px" width="19.600" height="19.600" viewBox="0 0 100 100"><path d="M96.500 10.800L75.900.9c-2.400-1.200-5.200-.7-7.100 1.200L29.300 38 12.100 25c-1.600-1.200-3.800-1.100-5.300.2l-5.500 5c-1.800 1.700-1.800 4.500 0 6.200L16.200 50 1.300 63.600c-1.800 1.700-1.800 4.500 0 6.200l5.500 5c1.500 1.300 3.700 1.400 5.300.2L29.300 62l39.500 36c1.900 1.900 4.700 2.400 7.100 1.200l20.600-9.900c2.200-1 3.500-3.200 3.500-5.600V16.400c0-2.400-1.400-4.600-3.500-5.600zM75 72.700L45.100 50 75 27.300z" fill="#1489d9"/><path d="M75.900.9L96.500 10.800c2.100 1 3.500 3.200 3.500 5.600v67.300c0 2.400-1.400 4.600-3.500 5.600L75.900 99.200c-.9.400 -.9.400 -.9.400V.5z" fill="#2db2f7"/></svg>
<div class="abs menu" style="left:49.4px;">文件<span style="letter-spacing:-0.62px">(F)</span></div>
<div class="abs menu" style="left:117.1px;">编辑<span style="letter-spacing:-0.81px">(E)</span></div>
<div class="abs menu" style="left:185.0px;">选择<span style="letter-spacing:-0.87px">(S)</span></div>
<div class="abs menu" style="left:253.4px;">查看<span style="letter-spacing:-0.65px">(V)</span></div>
<div class="abs menu" style="left:322.4px;">转到<span style="letter-spacing:-0.59px">(G)</span></div>
<svg class="abs" style="left:399px;top:17px" width="18" height="5" viewBox="0 0 18 5" fill="#ccc"><circle cx="2.300" cy="2.500" r="1.300"/><circle cx="8.200" cy="2.500" r="1.300"/><circle cx="14.100" cy="2.500" r="1.300"/></svg>
<svg class="abs" style="left:452px;top:11px" width="52" height="18" viewBox="0 0 52 18" fill="none" stroke="#7d7d7d" stroke-width="1.300" stroke-linecap="round" stroke-linejoin="round"><path d="M17.500 9.200H2.600M8.600 3.200L2.600 9.200l6 6"/><path d="M33.800 9.200h14.900M42.700 3.200l6 6-6 6"/></svg>
<div id="sbox" class="abs"></div>
<svg class="abs" style="left:808px;top:9px" width="20" height="20" viewBox="0 0 20 20" fill="none" stroke="#c0c0c0" stroke-width="1.400" stroke-linecap="round"><circle cx="12.200" cy="7.400" r="5.300"/><path d="M8.500 11.300L2.400 17.600"/></svg>
<div class="abs menu" style="left:832.1px;top:8.500px;color:#c8c8c8;font-size:14.700px">搜索</div>
<svg class="abs" style="left:72.0px;top:55.5px" width="16" height="12" viewBox="0 0 16 12"><g transform="translate(16 0) scale(-1 1)"><path d="M1 5.200C1 2.300 3.200.6 6.200.6c1.400 0 2.400.300 3.300.900.500-.500 1.300-.800 2.100-.800 1.700 0 3.200 1.300 3.200 3.300 0 .900-.200 1.500-.600 2v3.700c0 .600-.400 1-.900 1s-.900-.400-.900-1V8.600h-1.100v1.500c0 .600-.400 1-.900 1s-.900-.400-.900-1V8.900c-.700.200-1.400.300-2.200.300v1.200c0 .600-.400 1-.900 1s-.900-.400-.900-1V8.800c-.300-.100-.600-.300-.900-.500v1.900c0 .600-.400 1-.900 1s-.900-.400-.900-1V7.600C1.300 7 1 6.200 1 5.200z" fill="#a074c4"/><path d="M9.400 1.600c-.700.700-1.100 1.600-1.100 2.700 0 1.300.600 2.300 1.500 2.900" stroke="#7a53a0" stroke-width=".8" fill="none"/><circle cx="12.300" cy="3.600" r=".55" fill="#3a2850"/></g></svg>
<div class="abs " style="left:94.7px;top:50px;line-height:24px;font-size:16.200px;color:#fff;white-space:nowrap"><span style="letter-spacing:-0.05px">up.php</span></div>
<svg class="abs" style="left:176.6px;top:55.5px" width="13" height="13" viewBox="0 0 13 13" fill="none" stroke="#f0f0f0" stroke-width="1.350"><path d="M1.200 1.200l10.300 10.300M11.500 1.200L1.200 11.500"/></svg>
<div class="abs crumb" style="left:75.5px;"><span style="letter-spacing:-1.22px">E:</span></div>
<div class="abs crumb" style="left:105.8px;"><span style="letter-spacing:-0.11px">phpstudy_pro</span></div>
<div class="abs crumb" style="left:220.6px;"><span style="letter-spacing:-0.69px">WWW</span></div>
<div class="abs crumb" style="left:283.7px;"><span style="letter-spacing:0.17px">tpdemo</span></div>
<div class="abs crumb" style="left:382.5px;"><span style="letter-spacing:0.05px">up.php</span></div>
<svg class="abs" style="left:93.2px;top:90.6px" width="8" height="12" viewBox="0 0 8 12" fill="none" stroke="#a9a9a9" stroke-width="1.200"><path d="M1 .8l5.600 5.200L1 11.200"/></svg>
<svg class="abs" style="left:207.6px;top:90.6px" width="8" height="12" viewBox="0 0 8 12" fill="none" stroke="#a9a9a9" stroke-width="1.200"><path d="M1 .8l5.600 5.200L1 11.200"/></svg>
<svg class="abs" style="left:270.6px;top:90.6px" width="8" height="12" viewBox="0 0 8 12" fill="none" stroke="#a9a9a9" stroke-width="1.200"><path d="M1 .8l5.600 5.200L1 11.200"/></svg>
<svg class="abs" style="left:344.4px;top:90.6px" width="8" height="12" viewBox="0 0 8 12" fill="none" stroke="#a9a9a9" stroke-width="1.200"><path d="M1 .8l5.600 5.200L1 11.200"/></svg>
<svg class="abs" style="left:360.2px;top:89.5px" width="16" height="12" viewBox="0 0 16 12"><g transform="translate(16 0) scale(-1 1)"><path d="M1 5.200C1 2.300 3.200.6 6.200.6c1.400 0 2.400.300 3.300.900.500-.500 1.300-.800 2.100-.800 1.700 0 3.200 1.300 3.200 3.300 0 .900-.200 1.500-.600 2v3.700c0 .600-.400 1-.900 1s-.900-.400-.900-1V8.600h-1.100v1.500c0 .600-.400 1-.900 1s-.900-.400-.900-1V8.900c-.700.200-1.400.300-2.200.300v1.200c0 .600-.400 1-.900 1s-.900-.400-.900-1V8.800c-.300-.100-.600-.300-.900-.500v1.900c0 .600-.400 1-.900 1s-.900-.400-.900-1V7.600C1.300 7 1 6.200 1 5.200z" fill="#a074c4"/><path d="M9.400 1.600c-.700.700-1.100 1.600-1.100 2.700 0 1.300.600 2.300 1.500 2.900" stroke="#7a53a0" stroke-width=".8" fill="none"/><circle cx="12.300" cy="3.600" r=".55" fill="#3a2850"/></g></svg>
<div class="abs ln" style="top:110px">1</div>
<div class="abs ln" style="top:147px">2</div>
<div class="abs ln" style="top:184px">3</div>
<div class="abs ln" style="top:221px;color:#ccc">4</div>
<div class="abs ln" style="top:258px">5</div>
<div class="abs code" style="top:110px"><span style="color:#569cd6">&lt;?php</span></div>
<div class="abs code" style="top:147px"><span style="color:#dcdcaa">phpinfo</span><span style="color:#ffd700">()</span>;</div>
<div class="abs code" style="top:184px"><span style="color:#dcdcaa">echo</span> <span style="color:#b5cea8">123</span>;</div>
<div class="abs" style="left:368.300px;top:221px;width:120.800px;height:36.500px;background:#47525f"></div>
<div class="abs" style="left:353.200px;top:256.600px;width:151.500px;height:1.400px;background:#b39200"></div>
<div class="abs" style="left:367.600px;top:221px;width:2px;height:36.500px;background:#aeafad"></div>
<div class="abs code" style="top:221px"><span style="color:#dcdcaa">echo</span> <span style="color:#dcdcaa">system</span><span style="color:#ffd700">(</span><span style="color:#ce9178">"ipconfig"</span><span style="color:#ffd700">)</span>;</div>
<div class="abs code" style="top:258px"><span style="color:#569cd6">?&gt;</span>;</div>

<!-- lightbulb -->
<svg class="abs" style="left:68.300px;top:222px" width="17.400" height="19.800" viewBox="0 0 15 18"><path d="M7.300 1A5.400 5.400 0 0 0 4 10.700c.6.500.9 1.100.9 1.800h4.800c0-.7.300-1.300.9-1.800A5.400 5.400 0 0 0 7.300 1z" fill="#ffcc00"/><path d="M5 13.500h4.600v1.500c0 .8-.6 1.400-1.400 1.400H6.400c-.8 0-1.400-.6-1.400-1.400z" fill="#ffcc00"/><path d="M6.200 13.600h2.200v1.400H6.200z" fill="#1f1f1f"/></svg>
<!-- activity bar icons -->
<svg class="abs" style="left:0;top:41px" width="57" height="400" viewBox="0 0 57 400" fill="none" stroke="#868686" stroke-width="1.600" stroke-linejoin="round" stroke-linecap="round">
  <!-- files -->
  <path d="M25 13.500H34.700L39.500 18.300V32a2.500 2.500 0 0 1-2.500 2.500H25a2.500 2.500 0 0 1-2.500-2.500V16a2.500 2.500 0 0 1 2.500-2.500z"/>
  <path d="M34.700 13.500V18.300H39.500"/>
  <path d="M22.500 20.500H18a2.500 2.500 0 0 0-2.500 2.500V39a2.500 2.500 0 0 0 2.500 2.500H30a2.500 2.500 0 0 0 2.500-2.500V34.500"/>
  <!-- search -->
  <circle cx="32" cy="81" r="9.300"/><path d="M25.800 88.200L15.600 99.400"/>
  <!-- scm -->
  <circle cx="21.700" cy="133.500" r="3.900"/><circle cx="21.700" cy="153.300" r="3.900"/><circle cx="34.500" cy="138.700" r="3.900"/>
  <path d="M21.700 137.400V149.400M33.300 142.400L30 145.800H25.500Q22.200 146.400 21.800 149.200"/>
  <!-- debug -->
  <path d="M23.500 198.500V186.500L42 198 30.300 205.600"/>
  <ellipse cx="20.700" cy="208" rx="4.300" ry="6.200"/><path d="M16.600 205.600h8.200M13.600 202.200l3 2.400M27.800 202.200l-3 2.400M13 208.600h3.200M25.200 208.600h3.200M13.600 215l2.800-2.300M27.800 215l-2.800-2.300"/>
  <!-- extensions -->
  <path d="M17 248.500h11.500v10.700H17zM17 259.200h11.500v11.100H17zM28.500 259.200h11.500v11.100H28.500z"/>
  <path d="M35.500 246.500l6.200 6.200-6.200 6.200-6.200-6.200z"/>
</svg>
<div class="abs" style="left:27.900px;top:299.900px;width:18.800px;height:18.800px;border-radius:50%;background:#0078d4;color:#fff;font:bold 11.500px/18.800px 'Liberation Sans',sans-serif;text-align:center">3</div>
<!-- robot -->
<svg class="abs" style="left:10px;top:340px" width="36" height="38" viewBox="0 0 36 38" fill="none" stroke="#868686" stroke-width="1.800" stroke-linejoin="round" stroke-linecap="round">
  <path d="M11 8.600h14a5 5 0 0 1 5 5v3.400l2.600 3.600-2.600 3.600v3.800a5 5 0 0 1-5 5H11a5 5 0 0 1-5-5v-3.800L3.400 20.600 6 17v-3.400a5 5 0 0 1 5-5z"/>
  <circle cx="17.500" cy="5.600" r="2.400" fill="#868686"/>
  <path d="M13.300 16.800v6.800M21.300 16.800v6.800" stroke-width="3.600"/>
</svg>
<!-- account -->
<svg class="abs" style="left:12px;top:883px" width="32" height="32" viewBox="0 0 32 32" fill="none" stroke="#8b8b8b" stroke-width="1.700"><circle cx="16" cy="16.400" r="14.600"/><circle cx="16" cy="13.600" r="7.200"/></svg>

</div>
</body>
</html>
